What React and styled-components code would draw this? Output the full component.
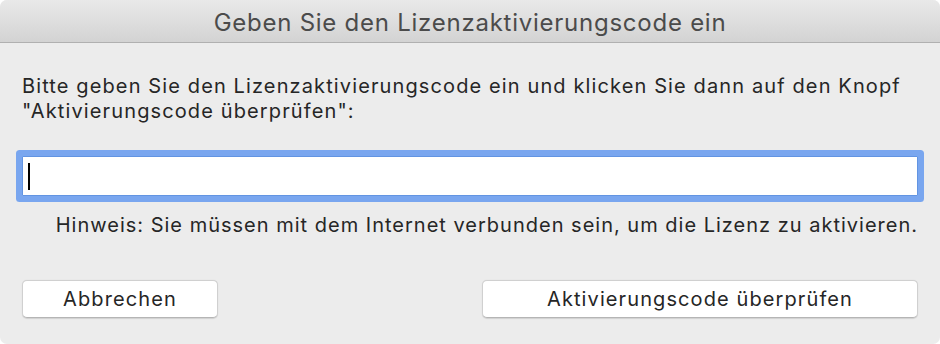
import React from 'react';
import styled, { createGlobalStyle } from 'styled-components';

const GlobalStyle = createGlobalStyle`
  html, body {
    margin: 0;
    padding: 0;
    background: #ffffff;
  }
  body {
    font-family: Inter, 'Liberation Sans', Arial, sans-serif;
  }
`;

const Window = styled.div`
  width: 940px;
  height: 344px;
  box-sizing: border-box;
  border-radius: 7px;
  overflow: hidden;
  background: #ececec;
  display: flex;
  flex-direction: column;
`;

const TitleBar = styled.div`
  height: 43px;
  flex: 0 0 43px;
  border-bottom: 1px solid #b0b0b0;
  background: linear-gradient(#e9e9e9, #d3d3d3);
  display: flex;
  align-items: center;
  justify-content: center;
  font-size: 24px;
  letter-spacing: 0.75px;
  color: #4b4b4b;
  padding-top: 2px;
  box-sizing: border-box;
`;

const Body = styled.div`
  padding: 0 22px;
  display: flex;
  flex-direction: column;
`;

const Message = styled.p`
  margin: 31px 0 0;
  font-size: 20px;
  letter-spacing: 1.12px;
  line-height: 25px;
  color: #262626;
`;

const Field = styled.div`
  margin-top: 32px;
  height: 40px;
  box-sizing: border-box;
  background: #fff;
  border: 1px solid #6294e2;
  border-radius: 1px;
  box-shadow: 0 0 0 6px #79a6ef;
  display: flex;
  align-items: center;
  padding-left: 5px;
`;

const Caret = styled.span`
  width: 2px;
  height: 27px;
  background: #000;
`;

const Hint = styled.p`
  margin: 17px 0 0;
  text-align: right;
  font-size: 20px;
  letter-spacing: 1px;
  line-height: 25px;
  color: #262626;
`;

const Actions = styled.div`
  margin-top: 42px;
  display: flex;
  justify-content: space-between;
`;

const Button = styled.button`
  width: ${p => p.width}px;
  height: 38px;
  box-sizing: border-box;
  background: #fff;
  border: 1px solid #d0d0d0;
  border-bottom-color: #b5b5b5;
  border-radius: 5px;
  box-shadow: 0 0.5px 1px rgba(0, 0, 0, 0.12);
  font-family: inherit;
  font-size: 20px;
  letter-spacing: 1.1px;
  color: #262626;
  padding: 0;
`;

export default function App() {
  return (
    <>
      <GlobalStyle />
      <Window>
        <TitleBar>Geben Sie den Lizenzaktivierungscode ein</TitleBar>
        <Body>
          <Message>
            Bitte geben Sie den Lizenzaktivierungscode ein und klicken Sie dann auf den Knopf
            <br />
            "Aktivierungscode überprüfen":
          </Message>
          <Field>
            <Caret />
          </Field>
          <Hint>Hinweis: Sie müssen mit dem Internet verbunden sein, um die Lizenz zu aktivieren.</Hint>
          <Actions>
            <Button width={196}>Abbrechen</Button>
            <Button width={436}>Aktivierungscode überprüfen</Button>
          </Actions>
        </Body>
      </Window>
    </>
  );
}
